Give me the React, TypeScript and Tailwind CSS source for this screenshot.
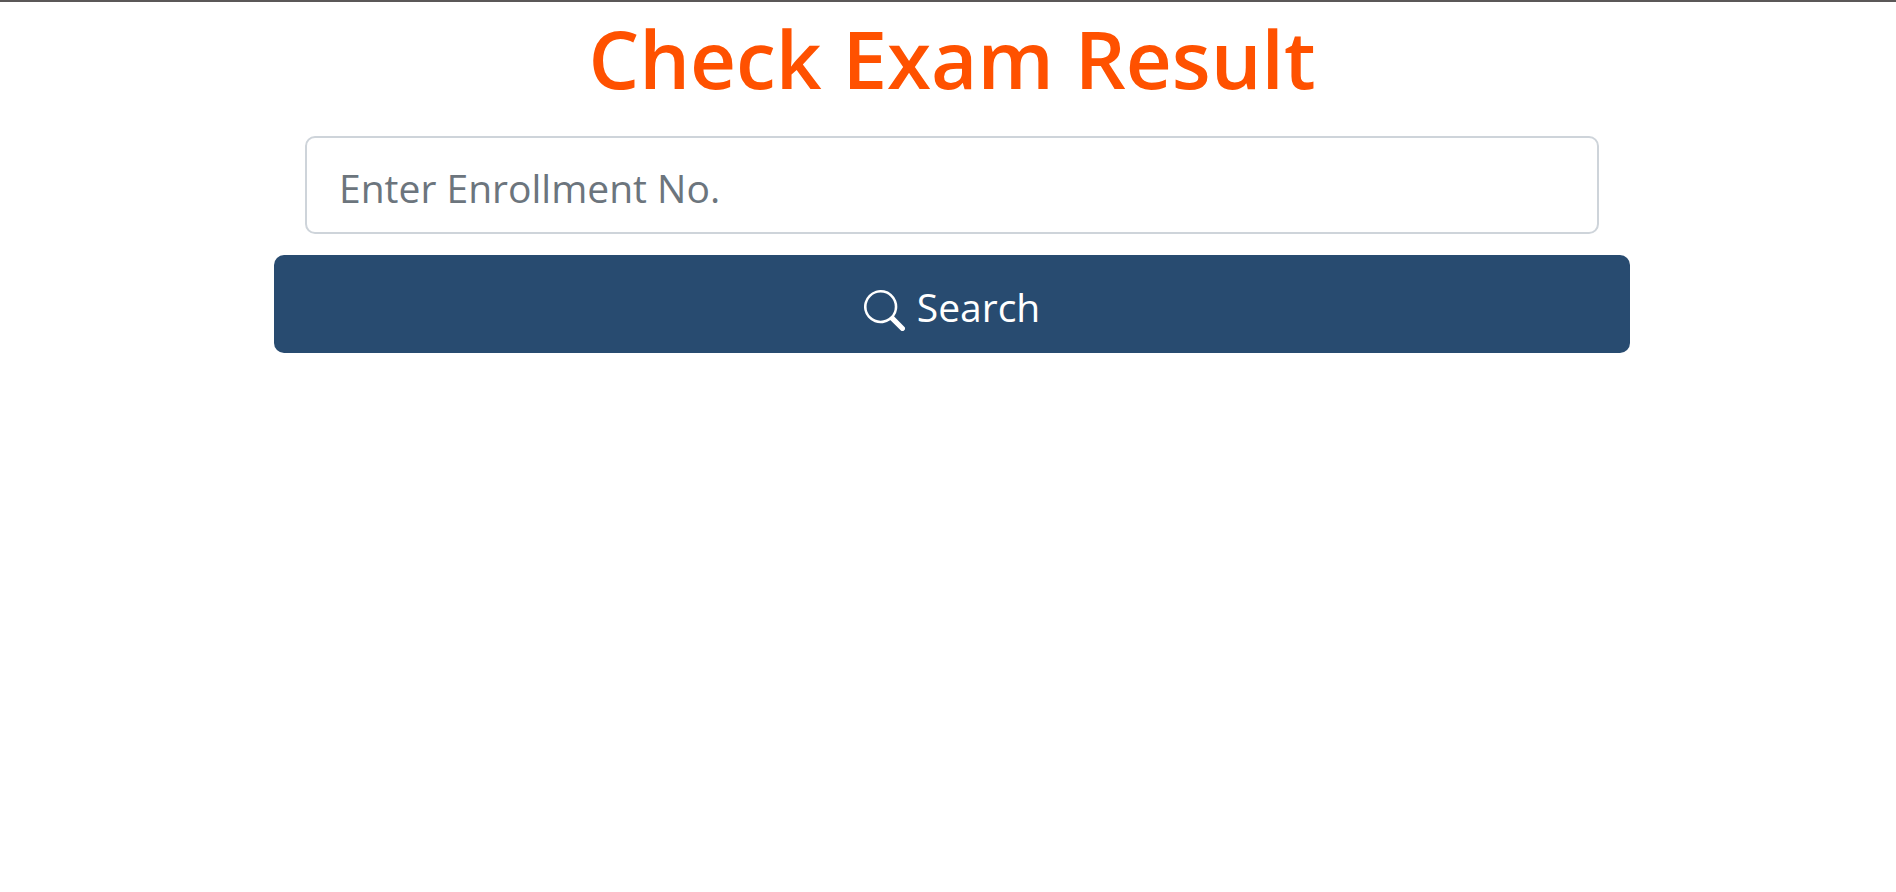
import { useState } from "react";
import type { FormEvent } from "react";
import { BsSearch } from "react-icons/bs";

export default function App() {
  const [enrollmentNo, setEnrollmentNo] = useState("");

  const handleSubmit = (e: FormEvent) => {
    e.preventDefault();
  };

  return (
    <div className="min-h-screen border-t-2 border-[#5b5858] bg-white pl-2 font-['Open_Sans',sans-serif]">
      <main className="mx-auto w-full max-w-[1356px]">
        <h1 className="pt-1.5 pb-2.5 text-center text-[80px] leading-[100px] font-semibold text-[#ff5100]">
          Check Exam Result
        </h1>
        <form onSubmit={handleSubmit} className="mt-[18px] flex flex-col">
          <div className="flex px-[31px]">
            <input
              type="text"
              aria-label="Enrollment number"
              placeholder="Enter Enrollment No."
              value={enrollmentNo}
              onChange={(e) => setEnrollmentNo(e.target.value)}
              className="h-[98px] w-full rounded-[10px] border-2 border-[#ced4da] px-8 pt-1 text-[39px] text-[#212529] outline-none placeholder:text-[#6c757d]"
            />
          </div>
          <button
            type="submit"
            className="mt-[21px] flex h-[98px] w-full cursor-pointer items-center justify-center gap-3 rounded-[10px] bg-[#284b70] pt-2.5 pb-1 text-[39px] leading-[60px] text-white"
          >
            <BsSearch className="mt-1.5 size-[41px]" />
            Search
          </button>
        </form>
      </main>
    </div>
  );
}
